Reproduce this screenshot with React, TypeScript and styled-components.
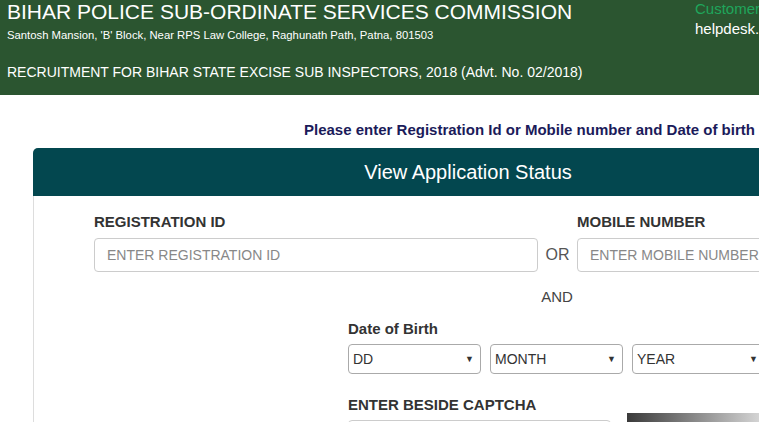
import React from "react";
import styled, { createGlobalStyle } from "styled-components";

const Global = createGlobalStyle`
  html, body {
    margin: 0;
    padding: 0;
    overflow: hidden;
    background: #fff;
    font-family: "Liberation Sans", Arial, sans-serif;
  }
`;

const App = () => {
  return (
    <Page>
      <Global />
      <Header>
        <Brand>
          <Title>BIHAR POLICE SUB-ORDINATE SERVICES COMMISSION</Title>
          <Address>
            Santosh Mansion, 'B' Block, Near RPS Law College, Raghunath Path, Patna, 801503
          </Address>
          <Recruit>
            RECRUITMENT FOR BIHAR STATE EXCISE SUB INSPECTORS, 2018 (Advt. No. 02/2018)
          </Recruit>
        </Brand>
        <Help>
          <HelpLabel>Customer Support</HelpLabel>
          <HelpMail>helpdesk.bpssc@gmail.com</HelpMail>
        </Help>
      </Header>

      <Notice>Please enter Registration Id or Mobile number and Date of birth</Notice>

      <Panel>
        <PanelHead>View Application Status</PanelHead>
        <PanelBody>
          <IdRow>
            <Field width="444px">
              <Label>REGISTRATION ID</Label>
              <TextInput placeholder="ENTER REGISTRATION ID" />
            </Field>
            <Or>OR</Or>
            <Field width="300px">
              <Label>MOBILE NUMBER</Label>
              <TextInput placeholder="ENTER MOBILE NUMBER" />
            </Field>
          </IdRow>
          <And>AND</And>
          <Block top="15px">
            <DobLabel>Date of Birth</DobLabel>
            <SelectRow>
              <Select>
                <span>DD</span>
                <Arrow>▼</Arrow>
              </Select>
              <Select>
                <span>MONTH</span>
                <Arrow>▼</Arrow>
              </Select>
              <Select>
                <span>YEAR</span>
                <Arrow>▼</Arrow>
              </Select>
            </SelectRow>
          </Block>
          <Block top="22px">
            <CaptchaLabel>ENTER BESIDE CAPTCHA</CaptchaLabel>
            <CaptchaRow>
              <CaptchaInput />
              <CaptchaImage />
            </CaptchaRow>
          </Block>
        </PanelBody>
      </Panel>
    </Page>
  );
};

export default App;

const Page = styled.div`
  width: 1000px;
`;

const Header = styled.header`
  display: flex;
  justify-content: space-between;
  height: 95px;
  padding: 0 7px;
  background: #2b5530;
  color: #fff;
`;

const Brand = styled.div`
  display: flex;
  flex-direction: column;
`;

const Title = styled.h1`
  margin: 0;
  font-size: 21px;
  font-weight: normal;
  line-height: 23px;
`;

const Address = styled.p`
  margin: 6px 0 0;
  font-size: 11.3px;
  line-height: 13px;
`;

const Recruit = styled.p`
  margin: 22px 0 0;
  font-size: 14px;
  line-height: 16px;
`;

const Help = styled.div`
  width: 298px;
`;

const HelpLabel = styled.div`
  font-size: 15px;
  line-height: 17px;
  color: #1fa65c;
`;

const HelpMail = styled.div`
  margin-top: 3px;
  font-size: 15px;
  line-height: 17px;
`;

const Notice = styled.p`
  margin: 27px 0 0;
  padding-left: 304px;
  font-size: 15px;
  font-weight: bold;
  line-height: 16px;
  color: #1b1b5a;
`;

const Panel = styled.section`
  margin: 10px 0 0 33px;
  width: 868px;
  border: 1px solid #ddd;
  border-top: none;
  border-radius: 5px 5px 0 0;
`;

const PanelHead = styled.h2`
  margin: 0 -1px;
  height: 48px;
  border-radius: 5px 5px 0 0;
  background: #03474f;
  color: #fff;
  font-size: 20px;
  font-weight: normal;
  line-height: 48px;
  text-align: center;
`;

const PanelBody = styled.div`
  padding: 17px 0 0 60px;
`;

const IdRow = styled.div`
  display: flex;
  align-items: flex-end;
`;

const Field = styled.div<{ width: string }>`
  width: ${(p) => p.width};
  display: flex;
  flex-direction: column;
`;

const Label = styled.label`
  font-size: 15px;
  font-weight: bold;
  color: #333;
  line-height: 17px;
  margin-bottom: 8px;
`;

const DobLabel = styled(Label)`
  margin-bottom: 7px;
`;

const CaptchaLabel = styled(Label)`
  margin-bottom: 0;
`;

const TextInput = styled.input`
  box-sizing: border-box;
  height: 34px;
  padding: 0 12px;
  border: 1px solid #ccc;
  border-radius: 4px;
  font-family: "Liberation Sans", Arial, sans-serif;
  font-size: 14px;
  color: #555;
  &::placeholder {
    color: #888;
  }
`;

const Or = styled.span`
  width: 39px;
  height: 34px;
  line-height: 34px;
  font-size: 16px;
  color: #555;
  text-align: center;
`;

const And = styled.div`
  margin: 16px 0 0 438px;
  width: 50px;
  font-size: 15px;
  color: #444;
  text-align: center;
  line-height: 17px;
`;

const Block = styled.div<{ top: string }>`
  display: flex;
  flex-direction: column;
  margin: ${(p) => p.top} 0 0 254px;
`;

const SelectRow = styled.div`
  display: flex;
  gap: 9px;
`;

const Select = styled.div`
  box-sizing: border-box;
  display: flex;
  align-items: center;
  justify-content: space-between;
  width: 133px;
  height: 30px;
  padding: 0 6px 0 4px;
  border: 1px solid #aaa;
  border-radius: 4px;
  font-size: 14px;
  color: #333;
`;

const Arrow = styled.span`
  font-size: 9px;
  color: #333;
`;

const CaptchaRow = styled.div`
  display: flex;
  gap: 16px;
  align-items: flex-start;
`;

const CaptchaInput = styled.input`
  box-sizing: border-box;
  width: 263px;
  height: 34px;
  margin-top: 7px;
  border: 1px solid #ccc;
  border-radius: 4px;
`;

const CaptchaImage = styled.div`
  width: 140px;
  height: 40px;
  background: linear-gradient(to right, #3a3a3a, #ddd);
`;
